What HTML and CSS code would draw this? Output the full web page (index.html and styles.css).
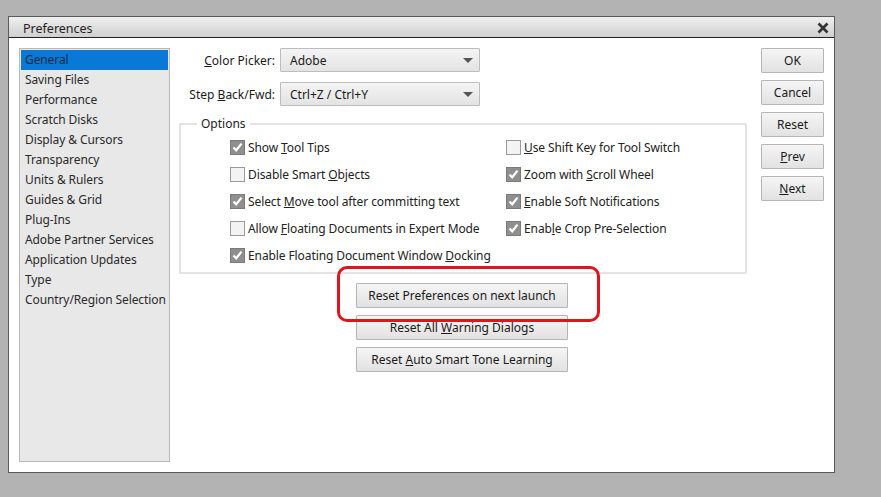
FILE: index.html
```html
<!DOCTYPE html>
<html>
<head>
<meta charset="utf-8">
<link rel="stylesheet" href="styles.css">
</head>
<body>
<div class="dialog">
  <div class="titlebar">
    <span class="title">Preferences</span>
    <svg class="close" width="12" height="12" viewBox="0 0 12 12"><path d="M1.5 1.5 L10.5 10.5 M10.5 1.5 L1.5 10.5" stroke="#333" stroke-width="2.6"/></svg>
  </div>
  <div class="body">
    <ul class="nav">
      <li class="sel">General</li>
      <li>Saving Files</li>
      <li>Performance</li>
      <li>Scratch Disks</li>
      <li>Display &amp; Cursors</li>
      <li>Transparency</li>
      <li>Units &amp; Rulers</li>
      <li>Guides &amp; Grid</li>
      <li>Plug-Ins</li>
      <li>Adobe Partner Services</li>
      <li>Application Updates</li>
      <li>Type</li>
      <li>Country/Region Selection</li>
    </ul>
    <div class="main">
      <div class="field">
        <label class="lbl"><u>C</u>olor Picker:</label>
        <div class="select"><span>Adobe</span><i class="arrow"></i></div>
      </div>
      <div class="field f2">
        <label class="lbl">Step <u>B</u>ack/Fwd:</label>
        <div class="select"><span>Ctrl+Z / Ctrl+Y</span><i class="arrow"></i></div>
      </div>
      <fieldset class="options">
        <legend>Options</legend>
        <div class="grid">
          <div class="cb on"><span>Show <u>T</u>ool Tips</span></div>
          <div class="cb"><span><u>U</u>se Shift Key for Tool Switch</span></div>
          <div class="cb"><span>Disable Smart <u>O</u>bjects</span></div>
          <div class="cb on"><span>Zoom with <u>S</u>croll Wheel</span></div>
          <div class="cb on"><span>Select <u>M</u>ove tool after committing text</span></div>
          <div class="cb on"><span><u>E</u>nable Soft Notifications</span></div>
          <div class="cb"><span>Allow <u>F</u>loating Documents in Expert Mode</span></div>
          <div class="cb on"><span>Enab<u>l</u>e Crop Pre-Selection</span></div>
          <div class="cb on"><span>Enable Floating Document Window <u>D</u>ocking</span></div>
        </div>
      </fieldset>
      <div class="resets">
        <button class="btn wide">Reset Preferences on next launch</button>
        <button class="btn wide">Reset All <u>W</u>arning Dialogs</button>
        <button class="btn wide">Reset <u>A</u>uto Smart Tone Learning</button>
        <div class="highlight"></div>
      </div>
    </div>
    <div class="side">
      <button class="btn">OK</button>
      <button class="btn">Cancel</button>
      <button class="btn">Reset</button>
      <button class="btn"><u>P</u>rev</button>
      <button class="btn"><u>N</u>ext</button>
    </div>
  </div>
</div>
</body>
</html>
```

FILE: styles.css
```css
* { box-sizing: border-box; }
html, body { margin: 0; padding: 0; }
body {
  width: 881px; height: 497px;
  background: #b3b3b3;
  font-family: "Noto Sans", "Open Sans", sans-serif;
  font-size: 12px;
  color: #1a1a1a;
  padding: 16px 0 0 8px;
}
u { text-decoration: underline; text-underline-offset: 1px; }
.dialog {
  width: 827px; height: 457px;
  border: 1px solid #5a5a5a;
  background: #fff;
  display: flex; flex-direction: column;
}
.titlebar {
  height: 21px;
  background: linear-gradient(#f0f0f0, #cfcfcf);
  border-bottom: 1px solid #222;
  display: flex; align-items: center; justify-content: space-between;
  padding: 0 5px 0 14px;
}
.title { font-size: 12.5px; color: #222; margin-top: 2px; }
.close { margin-top: 1px; }
.body { flex: 1; display: flex; padding: 10px; }
.nav {
  list-style: none; margin: 0; padding: 1px;
  width: 152px; height: 414px;
  background: #e8e8e8; border: 1px solid #b8b8b8;
}
.nav li { height: 20px; line-height: 20px; padding-left: 4px; color: #2a2a2a; white-space: nowrap; letter-spacing: -0.1px; }
.nav li.sel { background: #0a78d7; color: #1a2a3a; }
.main { width: 567px; margin-left: 9px; }
.field { display: flex; align-items: center; height: 24px; }
.f2 { margin-top: 10px; }
.lbl { width: 101px; text-align: right; padding-right: 5px; white-space: nowrap; }
.select {
  width: 200px; height: 24px;
  border: 1px solid #bdbdbd; border-radius: 1px;
  background: linear-gradient(#f4f4f4, #e3e3e3);
  display: flex; align-items: center; justify-content: space-between;
  padding: 0 6px 0 9px;
}
.arrow {
  width: 0; height: 0;
  border-left: 5px solid transparent; border-right: 5px solid transparent;
  border-top: 5px solid #555;
}
.options {
  margin: 9px 0 0 0; padding: 0;
  width: 568px; height: 159px;
  border: 2px solid #e3e3e3; border-radius: 1px;
}
.options legend { padding: 0 4px; margin-left: 16px; color: #222; }
.grid {
  display: grid; grid-template-columns: 276px 1fr;
  margin-top: 2px; padding-left: 49px;
}
.cb { height: 27px; display: flex; align-items: center; white-space: nowrap; color: #222; letter-spacing: -0.1px; }
.cb::before {
  content: ""; width: 13px; height: 13px; margin-right: 3px; flex: none;
  border: 1px solid #9a9a9a; background: #f3f3f3;
}
.cb.on::before {
  background: #8f8f8f url("data:image/svg+xml;utf8,<svg xmlns='http://www.w3.org/2000/svg' width='13' height='13' viewBox='0 0 13 13'><path d='M2.5 6.5 L5.2 9.3 L10.5 2.6' fill='none' stroke='white' stroke-width='2.2'/></svg>") center/13px no-repeat;
  border-color: #7a7a7a;
}
.resets {
  position: relative;
  display: flex; flex-direction: column; align-items: flex-start;
  gap: 7px; margin: 9px 0 0 177px;
}
.btn {
  font: inherit; color: #1a1a1a;
  height: 25px; width: 63px;
  border: 1px solid #b5b5b5; border-radius: 1px;
  background: linear-gradient(#f5f5f5, #e2e2e2);
  padding: 0;
}
.btn.wide { width: 212px; }
.highlight {
  position: absolute; left: -19px; top: -17px;
  width: 263px; height: 56px;
  border: 3px solid #e0141e; border-radius: 10px;
}
.side { margin-left: 15px; display: flex; flex-direction: column; gap: 7px; }
```
